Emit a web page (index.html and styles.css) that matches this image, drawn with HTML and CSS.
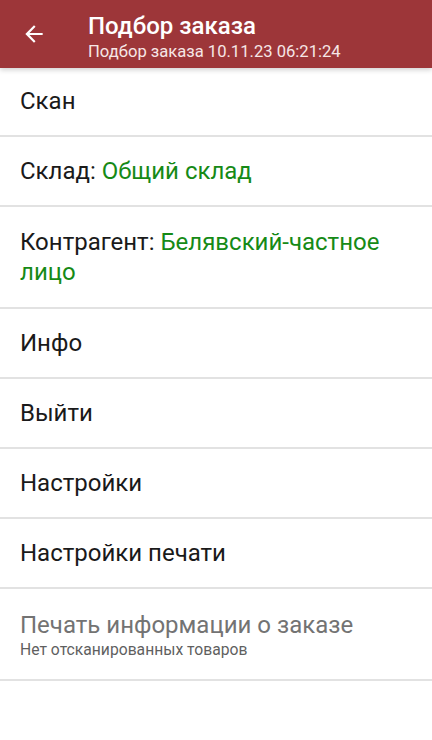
FILE: index.html
```html
<!DOCTYPE html>
<html lang="ru">
<head>
    <meta charset="UTF-8">
    <meta name="viewport" content="width=device-width, initial-scale=1.0">
    <title>Подбор заказа</title>
    <link rel="stylesheet" href="styles.css">
</head>
<body>
    <!-- Toolbar -->
    <div class="toolbar">
        <div class="back-button">
            <svg width="24" height="24" viewBox="0 0 24 24">
                <path d="M20 11H7.83l5.59-5.59L12 4l-8 8 8 8 1.41-1.41L7.83 13H20v-2z" fill="#fff"/>
            </svg>
        </div>
        <div class="toolbar-titles">
            <div class="toolbar-title">Подбор заказа</div>
            <div class="toolbar-subtitle">Подбор заказа 10.11.23 06:21:24</div>
        </div>
    </div>

    <!-- Menu list -->
    <div class="menu-list">
        <div class="menu-item first">Скан</div>
        <div class="menu-item">Склад: <span class="value">Общий склад</span></div>
        <div class="menu-item tall">Контрагент: <span class="value">Белявский-частное лицо</span></div>
        <div class="menu-item">Инфо</div>
        <div class="menu-item">Выйти</div>
        <div class="menu-item">Настройки</div>
        <div class="menu-item">Настройки печати</div>
        <div class="menu-item disabled">
            <div class="item-title">Печать информации о заказе</div>
            <div class="item-subtitle">Нет отсканированных товаров</div>
        </div>
    </div>
</body>
</html>
```

FILE: styles.css
```css
body {
    margin: 0;
    font-family: Roboto, 'Noto Sans', sans-serif;
    background-color: #fff;
    color: #1a1a1a;
}

.toolbar {
    height: 68px;
    background-color: #9d3639;
    display: flex;
    align-items: center;
    box-shadow: 0 2px 5px rgba(0, 0, 0, 0.18);
    position: relative;
}

.back-button {
    width: 88px;
    display: flex;
    align-items: center;
    padding-left: 21px;
    box-sizing: border-box;
}

.back-button svg {
    width: 26px;
    height: 26px;
}

.toolbar-titles {
    color: #fff;
    padding-top: 5px;
}

.toolbar-title {
    font-size: 24px;
    font-weight: 500;
    line-height: 30px;
}

.toolbar-subtitle {
    font-size: 16.6px;
    line-height: 22px;
    color: #f6e6e6;
}

.menu-item {
    font-size: 24px;
    line-height: 30px;
    padding: 19px 20px;
    border-bottom: 2px solid #e2e2e2;
    color: #1a1a1a;
}

.menu-item.first {
    padding-top: 18px;
}

.menu-item.tall {
    padding-top: 20px;
    padding-bottom: 20px;
}

.menu-item .value {
    color: #168a16;
}

.menu-item.disabled {
    padding-top: 21px;
}

.menu-item.disabled .item-title {
    color: #737373;
}

.item-subtitle {
    font-size: 15.7px;
    line-height: 20px;
    color: #5f5f5f;
}
```
